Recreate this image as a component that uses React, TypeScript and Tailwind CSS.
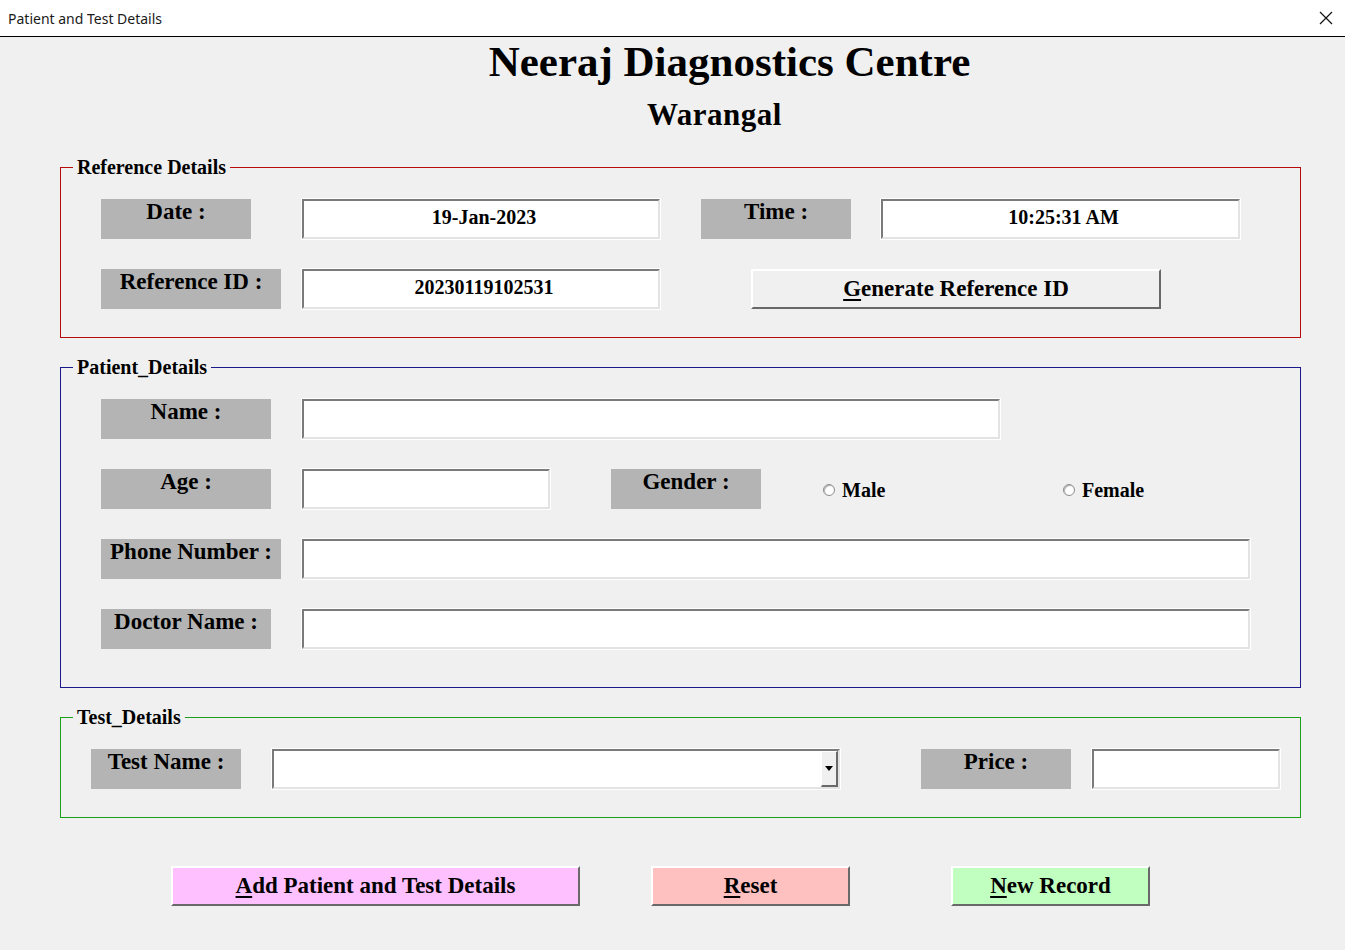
import React from "react";

const serif = { fontFamily: '"Liberation Serif", "Times New Roman", serif' };

function Label({ text, w }: { text: string; w: string }) {
  return (
    <div
      className={`${w} h-[40px] shrink-0 bg-[#b4b4b4] text-center text-[23px] font-bold leading-[26px] text-black`}
    >
      {text}
    </div>
  );
}

function Field({ w, value }: { w: string; value?: string }) {
  return (
    <div
      className={`${w} h-[40px] shrink-0 bg-white border-2 border-t-[#7a7a7a] border-l-[#7a7a7a] border-b-[#e3e3e3] border-r-[#e3e3e3] outline outline-1 outline-white flex items-center justify-center pl-[6px] pb-[4px] text-[20px] font-bold text-black`}
    >
      {value}
    </div>
  );
}

function Btn({
  w,
  bg,
  hot,
  rest,
}: {
  w: string;
  bg: string;
  hot: string;
  rest: string;
}) {
  return (
    <div
      className={`${w} ${bg} h-[40px] shrink-0 border-2 border-t-white border-l-white border-b-[#696969] border-r-[#696969] flex items-center justify-center text-[23px] font-bold text-black`}
    >
      <span className="underline underline-offset-[3px] decoration-[1.5px]">{hot}</span>
      {rest}
    </div>
  );
}

function Radio({ label }: { label: string }) {
  return (
    <div className="flex items-center gap-[7px]">
      <span className="w-[12px] h-[12px] rounded-full bg-white border border-[#8c8c8c] shadow-[inset_1px_1px_1px_#b0b0b0]" />
      <span className="text-[20px] font-bold text-black">{label}</span>
    </div>
  );
}

export default function App() {
  return (
    <div className="w-[1345px] h-[950px] bg-[#f0f0f0] overflow-hidden" style={serif}>
      {/* Title bar */}
      <div className="h-[37px] bg-white border-b border-black flex items-center justify-between pl-[8px] pr-[12px]">
        <span
          className="text-[14px] text-[#1a1a1a]"
          style={{ fontFamily: '"Noto Sans", "Open Sans", sans-serif' }}
        >
          Patient and Test Details
        </span>
        <svg width="14" height="14" viewBox="0 0 14 14">
          <path d="M1 1 L13 13 M13 1 L1 13" stroke="#111" strokeWidth="1.2" />
        </svg>
      </div>

      {/* Heading */}
      <div className="text-center pl-[114px] text-[43px] font-bold leading-[48px] mt-[1px] text-black">
        Neeraj Diagnostics Centre
      </div>
      <div className="text-center pl-[84px] text-[31px] font-bold leading-[36px] mt-[11px] text-black tracking-[0.5px]">
        Warangal
      </div>

      {/* Reference Details */}
      <fieldset className="ml-[60px] w-[1241px] mt-[24px] border border-[#b80c0c] pl-[40px] pt-[22px] pb-[28px]">
        <legend className="-ml-[28px] px-[4px] text-[20px] font-bold leading-[20px] text-black">
          Reference Details
        </legend>
        <div className="flex">
          <Label text="Date :" w="w-[150px]" />
          <div className="ml-[51px]">
            <Field w="w-[358px]" value="19-Jan-2023" />
          </div>
          <div className="ml-[41px]">
            <Label text="Time :" w="w-[150px]" />
          </div>
          <div className="ml-[30px]">
            <Field w="w-[359px]" value="10:25:31 AM" />
          </div>
        </div>
        <div className="flex mt-[30px]">
          <Label text="Reference ID :" w="w-[180px]" />
          <div className="ml-[21px]">
            <Field w="w-[358px]" value="20230119102531" />
          </div>
          <div className="ml-[91px]">
            <Btn w="w-[410px]" bg="bg-[#f0f0f0]" hot="G" rest="enerate Reference ID" />
          </div>
        </div>
      </fieldset>

      {/* Patient Details */}
      <fieldset className="ml-[60px] w-[1241px] mt-[19px] border border-[#1a1a8c] pl-[40px] pt-[22px] pb-[38px]">
        <legend className="-ml-[28px] px-[4px] text-[20px] font-bold leading-[20px] text-black">
          Patient_Details
        </legend>
        <div className="flex">
          <Label text="Name :" w="w-[170px]" />
          <div className="ml-[31px]">
            <Field w="w-[698px]" />
          </div>
        </div>
        <div className="flex mt-[30px]">
          <Label text="Age :" w="w-[170px]" />
          <div className="ml-[31px]">
            <Field w="w-[248px]" />
          </div>
          <div className="ml-[61px]">
            <Label text="Gender :" w="w-[150px]" />
          </div>
          <div className="ml-[62px] w-[240px] h-[40px] flex items-center pt-[2px]">
            <Radio label="Male" />
          </div>
          <div className="h-[40px] flex items-center pt-[2px]">
            <Radio label="Female" />
          </div>
        </div>
        <div className="flex mt-[30px]">
          <Label text="Phone Number :" w="w-[180px]" />
          <div className="ml-[21px]">
            <Field w="w-[948px]" />
          </div>
        </div>
        <div className="flex mt-[30px]">
          <Label text="Doctor Name :" w="w-[170px]" />
          <div className="ml-[31px]">
            <Field w="w-[948px]" />
          </div>
        </div>
      </fieldset>

      {/* Test Details */}
      <fieldset className="ml-[60px] w-[1241px] mt-[19px] border border-[#1aa01a] pl-[30px] pt-[22px] pb-[28px]">
        <legend className="-ml-[18px] px-[4px] text-[20px] font-bold leading-[20px] text-black">
          Test_Details
        </legend>
        <div className="flex">
          <Label text="Test Name :" w="w-[150px]" />
          <div className="ml-[31px] w-[568px] h-[40px] shrink-0 bg-white border-2 border-t-[#7a7a7a] border-l-[#7a7a7a] border-b-[#e3e3e3] border-r-[#e3e3e3] outline outline-1 outline-white flex justify-end">
            <div className="w-[17px] h-full bg-[#f0f0f0] border border-t-white border-l-white border-b-[#696969] border-r-[#696969] border-r-2 border-b-2 flex items-center justify-center">
              <svg width="8" height="5" viewBox="0 0 8 5">
                <path d="M0 0 H8 L4 5 Z" fill="#000" />
              </svg>
            </div>
          </div>
          <div className="ml-[81px]">
            <Label text="Price :" w="w-[150px]" />
          </div>
          <div className="ml-[21px]">
            <Field w="w-[188px]" />
          </div>
        </div>
      </fieldset>

      {/* Actions */}
      <div className="flex mt-[48px] pl-[171px]">
        <Btn w="w-[409px]" bg="bg-[#ffc0ff]" hot="A" rest="dd Patient and Test Details" />
        <div className="ml-[71px]">
          <Btn w="w-[199px]" bg="bg-[#ffc0c0]" hot="R" rest="eset" />
        </div>
        <div className="ml-[101px]">
          <Btn w="w-[199px]" bg="bg-[#c0ffc0]" hot="N" rest="ew Record" />
        </div>
      </div>
    </div>
  );
}
